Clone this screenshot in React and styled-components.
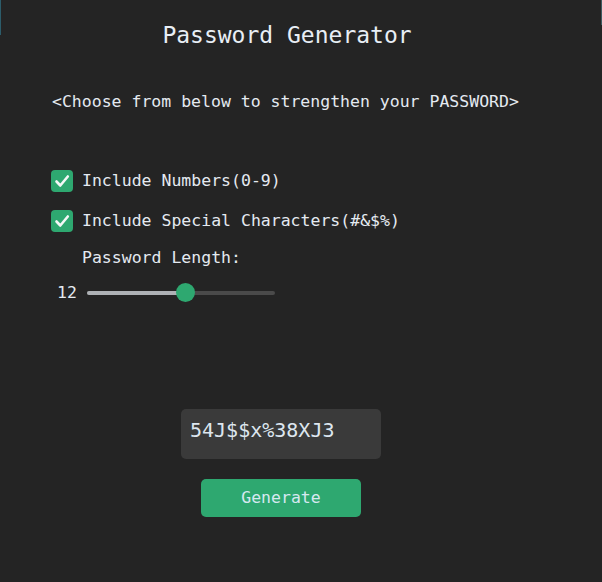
import React from "react";
import styled, { createGlobalStyle } from "styled-components";

const Global = createGlobalStyle`
  html, body { margin: 0; padding: 0; background: #242424; }
  body { font-family: "DejaVu Sans Mono", "Liberation Mono", monospace; color: #e4eaf1; }
  * { box-sizing: border-box; }
`;

const Page = styled.div`
  position: relative;
  width: 602px;
  height: 582px;
  background: #242424;
  overflow: hidden;
  display: flex;
  flex-direction: column;
  &::before {
    content: "";
    position: absolute;
    left: 0;
    top: 0;
    width: 1px;
    height: 35px;
    background: #2c5c6a;
  }
  &::after {
    content: "";
    position: absolute;
    right: 0;
    top: 0;
    width: 1px;
    height: 25px;
    background: #3d5a60;
  }
`;

const Title = styled.h1`
  margin: 21px 0 0;
  width: 574px;
  text-align: center;
  font-size: 23px;
  font-weight: normal;
  line-height: 28px;
  color: #e8eef5;
`;

const Options = styled.div`
  display: flex;
  flex-direction: column;
  padding-left: 51px;
`;

const Subtitle = styled.p`
  margin: 43px 0 0 1px;
  font-size: 16.5px;
  line-height: 20px;
  color: #e4eaf1;
`;

const CheckRow = styled.label`
  display: flex;
  align-items: center;
  gap: 9px;
  height: 22px;
  margin-top: ${(p) => p.$gap}px;
  font-size: 16.5px;
  line-height: 20px;
`;

const Box = styled.span`
  width: 22px;
  height: 22px;
  border-radius: 4px;
  background: #2ea870;
  display: flex;
  align-items: center;
  justify-content: center;
`;

const LengthLabel = styled.div`
  margin: 16px 0 0 31px;
  font-size: 16.5px;
  line-height: 20px;
`;

const SliderRow = styled.div`
  display: flex;
  align-items: center;
  gap: 10px;
  height: 19px;
  margin: 15px 0 0 6px;
`;

const Value = styled.span`
  font-size: 16.5px;
  line-height: 19px;
`;

const Track = styled.div`
  position: relative;
  width: 188px;
  height: 4px;
  border-radius: 2px;
  background: #4a4a4a;
`;

const Fill = styled.div`
  height: 100%;
  border-radius: 2px;
  background: #aeb1b5;
`;

const Thumb = styled.div`
  position: absolute;
  top: 50%;
  width: 19px;
  height: 19px;
  margin-left: -9.5px;
  margin-top: -9.5px;
  border-radius: 50%;
  background: #2ea870;
`;

const Output = styled.div`
  width: 562px;
  margin-top: 107px;
  display: flex;
  flex-direction: column;
  align-items: center;
  gap: 20px;
`;

const PasswordBox = styled.div`
  width: 200px;
  height: 50px;
  border-radius: 5px;
  background: #3a3a3a;
  padding: 9px 0 0 9px;
  font-size: 20px;
  line-height: 24px;
  color: #dde6ef;
`;

const Button = styled.button`
  width: 160px;
  height: 38px;
  border: none;
  border-radius: 5px;
  background: #2ea870;
  color: #d6e8f0;
  font-family: inherit;
  font-size: 16.5px;
  line-height: 20px;
  cursor: pointer;
`;

function Check() {
  return (
    <Box>
      <svg width="22" height="22" viewBox="0 0 22 22">
        <path d="M5.5 11.5 L9.3 15.5 L16.8 6.5" fill="none" stroke="#f4f7f6" strokeWidth="2.6" strokeLinecap="round" strokeLinejoin="round" />
      </svg>
    </Box>
  );
}

export default function App() {
  const pct = 0.522;
  return (
    <Page>
      <Global />
      <Title>Password Generator</Title>
      <Options>
        <Subtitle>&lt;Choose from below to strengthen your PASSWORD&gt;</Subtitle>
        <CheckRow $gap={58}>
          <Check />
          <span>Include Numbers(0-9)</span>
        </CheckRow>
        <CheckRow $gap={18}>
          <Check />
          <span>Include Special Characters(#&amp;$%)</span>
        </CheckRow>
        <LengthLabel>Password Length:</LengthLabel>
        <SliderRow>
          <Value>12</Value>
          <Track>
            <Fill style={{ width: `${pct * 100}%` }} />
            <Thumb style={{ left: `${pct * 100}%` }} />
          </Track>
        </SliderRow>
      </Options>
      <Output>
        <PasswordBox>54J$$x%38XJ3</PasswordBox>
        <Button>Generate</Button>
      </Output>
    </Page>
  );
}
